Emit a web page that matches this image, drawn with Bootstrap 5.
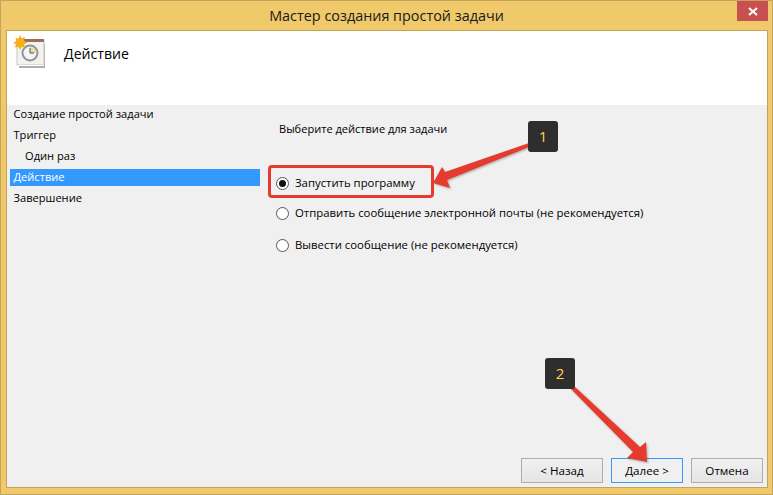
<!DOCTYPE html>
<html lang="ru">
<head>
<meta charset="utf-8">
<title>Мастер создания простой задачи</title>
<link href="https://cdn.jsdelivr.net/npm/bootstrap@5.3.0/dist/css/bootstrap.min.css" rel="stylesheet">
<style>
html,body{margin:0;height:100%;overflow:hidden;background:#f0c96a;}
body{font-family:"Open Sans","Noto Sans",sans-serif;font-size:11.35px;line-height:16px;color:#000;}
.win{position:relative;width:773px;height:495px;background:#f0c96a;border:1px solid #c2a45c;}
.titlebar{height:29px;color:#1a1a1a;font-size:14.4px;line-height:30px;}
.closex{position:absolute;top:0;right:4px;width:31px;height:20px;background:#c75050;}
.client{margin:0 4px 0 5px;height:458px;border:1px solid #c2a45c;background:#f0f0f0;}
.hdr{height:74px;background:#fff;}
.hdr-icon{width:36px;height:36px;margin:3px 0 0 6px;flex:none;}
.hdr-title{font-size:14.1px;line-height:20px;margin:13px 0 0 15px;}
.main{height:382px;}
.side{width:253px;padding:1px 0 0 3px;flex:none;font-size:11.1px;}
.step{height:17px;line-height:16px;margin-bottom:4px;padding-left:3.500px;width:250px;white-space:nowrap;}
.step-sub{padding-left:15px;}
.step-on{background:#3399ff;color:#fff;}
.pane{position:relative;flex:1;}
.prompt{margin:16px 0 0 19px;font-size:11.05px;}
.opt{display:flex;align-items:center;gap:6px;height:16px;margin-left:16px;}
.opts{margin-top:38px;gap:14px;}
.opt-last{margin-top:2px;}
.radio-o{width:13px;height:13px;border:1px solid #555;border-radius:50%;background:#fff;flex:none;display:flex;align-items:center;justify-content:center;}
.radio-on::after{content:"";width:7px;height:7px;border-radius:50%;background:#111;}
.foot{position:absolute;right:4px;bottom:4px;gap:8px;}
.wbtn{width:72px;height:25px;padding:0;border:1px solid #adadad;border-radius:0;background:linear-gradient(#f0f0f0,#e5e5e5);font-size:11.6px;line-height:16px;color:#000;}
.wbtn-wide{width:82px;}
.wbtn-focus{border-color:#3399ff;background:#f0f0f0;}
.redbox{position:absolute;left:267px;top:164px;width:166px;height:33px;border:3px solid #e53b2f;border-radius:4px;}
.callout{position:absolute;width:30px;height:31px;border-radius:3px;background:#2e2e2e;color:#ffd54a;font-size:15px;line-height:31px;text-align:center;}
.arrows{position:absolute;left:-1px;top:-1px;width:773px;height:495px;pointer-events:none;filter:drop-shadow(1px 1px 1px rgba(0,0,0,.3));}
</style>
</head>
<body>
<div class="win">
  <div class="titlebar text-center">Мастер создания простой задачи</div>
  <div class="closex d-flex align-items-center justify-content-center">
    <svg width="10" height="9" viewBox="0 0 10 9"><path d="M1 1l8 7M9 1L1 8" stroke="#fff" stroke-width="2" fill="none"/></svg>
  </div>
  <div class="client d-flex flex-column">
    <div class="hdr d-flex align-items-start">
      <svg class="hdr-icon" viewBox="0 0 36 36">
        <rect x="6" y="10" width="26" height="24" fill="#aeaeae"/>
        <rect x="4" y="7" width="27" height="24" fill="#f4f2ec" stroke="#c4c4c4"/>
        <rect x="4" y="5" width="27" height="3" fill="#9a6e5c"/>
        <rect x="5" y="31" width="26" height="1" fill="#fff"/>
        <circle cx="17" cy="19" r="7.500" fill="#f2f4f6" stroke="#8f959c" stroke-width="2"/>
        <path d="M17 13a6 6 0 0 1 6 6h-6z" fill="#f0d9a4"/>
        <path d="M17 14v5h4" stroke="#555" stroke-width="1" fill="none"/>
        <path d="M7 1l1.500 3.500 3.500-1.500-1 3.500 3.500 2-3.500 1.500 1 3.500-3.500-1-1.500 3.500-1.500-3.500-3.500 1 1-3.500L0 9l3.500-2-1-3.500 3 1.500z" fill="#f6a80e"/>
        <circle cx="7" cy="9" r="4.500" fill="#f8b018"/>
      </svg>
      <div class="hdr-title">Действие</div>
    </div>
    <div class="main d-flex">
      <div class="side">
        <div class="step">Создание простой задачи</div>
        <div class="step">Триггер</div>
        <div class="step step-sub">Один раз</div>
        <div class="step step-on">Действие</div>
        <div class="step">Завершение</div>
      </div>
      <div class="pane d-flex flex-column">
        <div class="prompt">Выберите действие для задачи</div>
        <div class="opts d-flex flex-column">
          <div class="opt"><span class="radio-o radio-on"></span><span>Запустить программу</span></div>
          <div class="opt"><span class="radio-o"></span><span>Отправить сообщение электронной почты (не рекомендуется)</span></div>
          <div class="opt opt-last"><span class="radio-o"></span><span>Вывести сообщение (не рекомендуется)</span></div>
        </div>
        <div class="foot d-flex">
          <button type="button" class="btn wbtn wbtn-wide">&lt; Назад</button>
          <button type="button" class="btn wbtn wbtn-focus">Далее &gt;</button>
          <button type="button" class="btn wbtn">Отмена</button>
        </div>
      </div>
    </div>
  </div>
  <div class="redbox"></div>
  <svg class="arrows" viewBox="0 0 773 495">
    <path d="M529 143L445 172 442 167 433 183 450 188 447 180 529 147z" fill="#e53b2f"/>
    <path d="M571 389L633 452 627 458 647 462 646 442 640 447 575 387z" fill="#e53b2f"/>
  </svg>
  <div class="callout" style="left:527px;top:120px">1</div>
  <div class="callout" style="left:544px;top:357px">2</div>
</div>
<script src="https://cdn.jsdelivr.net/npm/bootstrap@5.3.0/dist/js/bootstrap.bundle.min.js"></script>
</body>
</html>
